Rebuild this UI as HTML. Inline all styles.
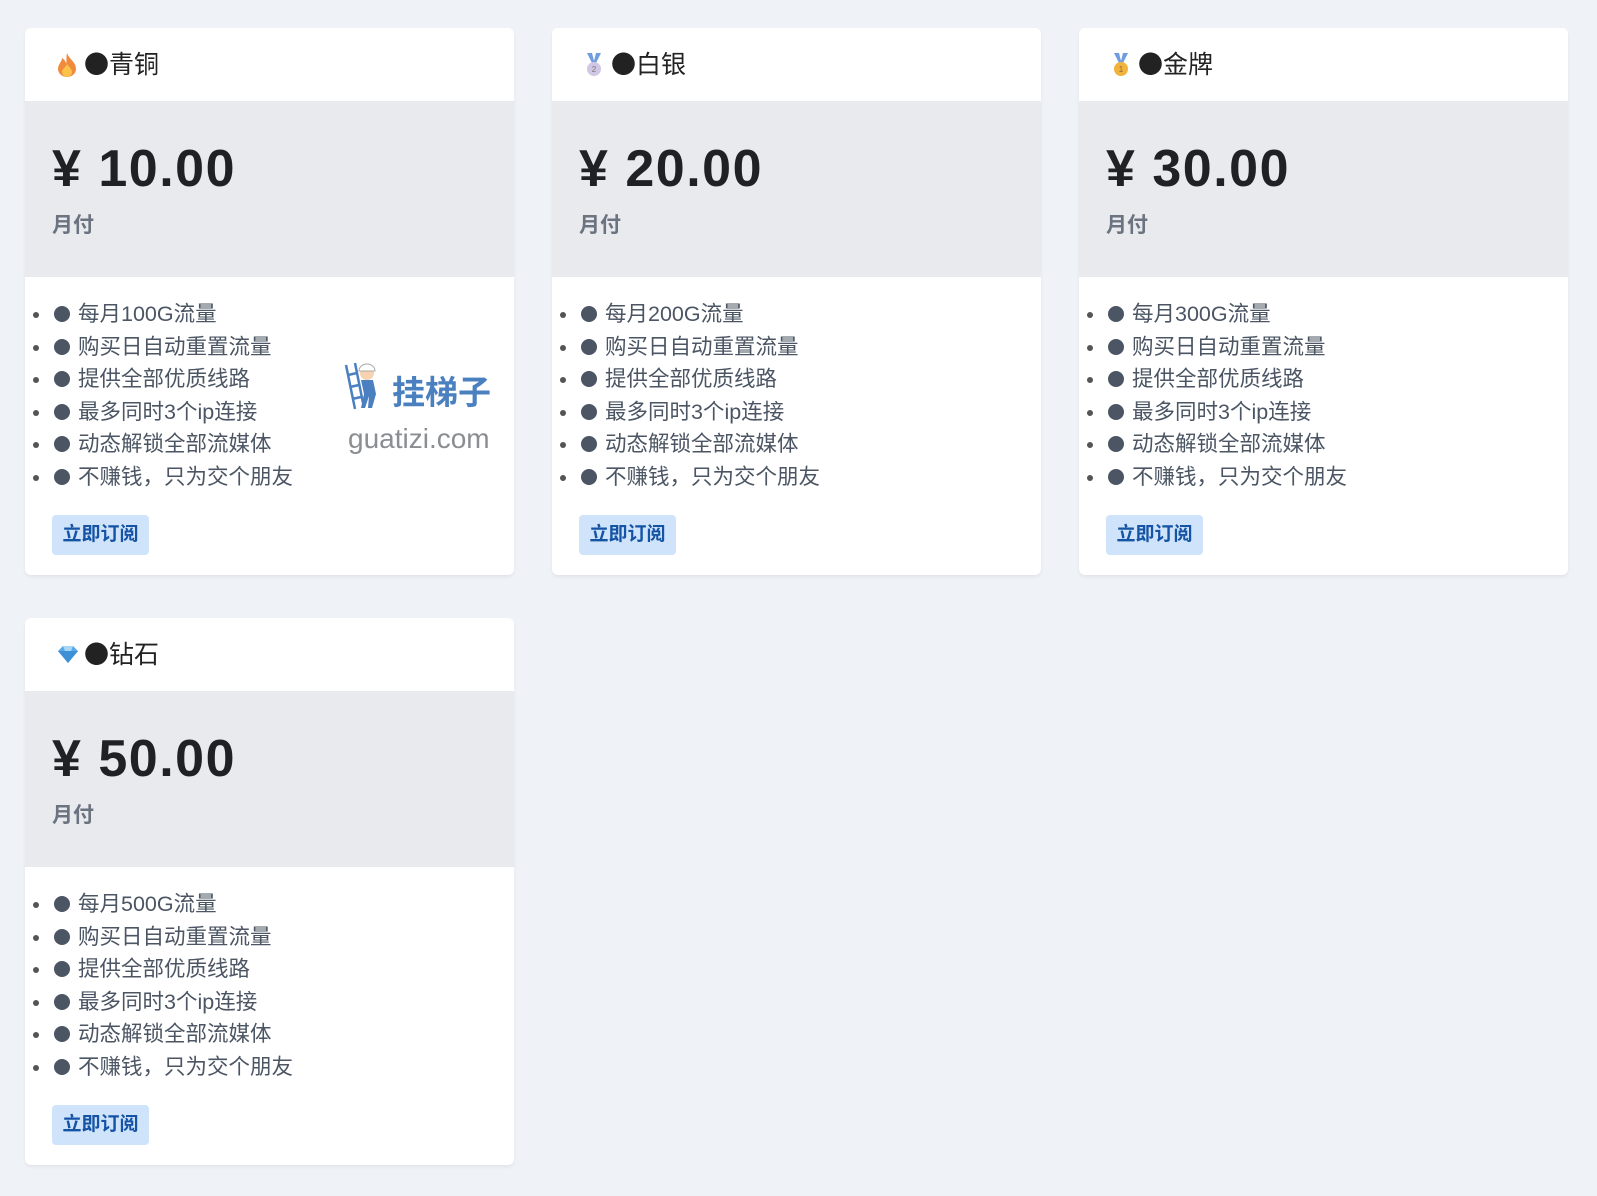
<!DOCTYPE html>
<html><head><meta charset="utf-8">
<style>
*{margin:0;padding:0;box-sizing:border-box}
body{width:1597px;height:1196px;background:#eff2f7;font-family:"Liberation Sans","Noto Sans CJK SC",sans-serif;position:relative;overflow:hidden}
.card{position:absolute;width:489px;height:547px;background:#fff;border-radius:6px;box-shadow:0 2px 3px rgba(0,0,0,.06);overflow:hidden}
.hd{height:73px;position:relative}
.hd svg{position:absolute;left:31px;top:24px}
.hd .t{position:absolute;left:59px;top:20px;font-size:25px;color:#222;line-height:30px;font-family:"Noto Sans CJK SC",sans-serif}
.pr{height:176px;background:#e8eaed;position:relative}
.pr .p{position:absolute;left:27px;top:42px;font-size:52px;line-height:52px;font-weight:bold;color:#1f2125;letter-spacing:1.5px}
.pr .m{position:absolute;left:27px;top:114px;font-size:21px;line-height:21px;font-weight:bold;color:#6b7280}
ul{position:absolute;left:0;top:270px;list-style:none}
li{position:relative;height:32.6px;line-height:32.6px;font-size:21.5px;color:#4b5563;padding-left:53px;white-space:nowrap}
li:before{content:"";position:absolute;left:8px;top:14px;width:6px;height:6px;border-radius:50%;background:#555}
li span{position:absolute;left:29px;top:8px;width:16px;height:16px;border-radius:50%;background:#4b5563}
.btn{position:absolute;left:27px;top:487px;width:97px;height:40px;background:#cfe4fb;border-radius:4px;color:#1553a5;font-weight:bold;font-size:19px;line-height:40px;text-align:center}
.wm1{position:absolute;left:367px;top:345px;font-size:33px;line-height:40px;font-weight:bold;color:#4a7fc0}
.wm2{position:absolute;left:323px;top:394px;font-size:28px;line-height:34px;color:#8a8d91}
</style></head><body>

<div class="card" style="left:25px;top:28px">
<div class="hd"><svg width="22" height="26" viewBox="0 0 22 26"><path d="M11 1C13 7 20 10 20 17a9 8 0 0 1-18 0C2 12 6 10 6 6c3 2 4 4 4 6 1-4 0-7 1-11z" fill="#f08a3c"/><path d="M11 12c2 3 5 5 5 8a5 5 0 0 1-10 0c0-3 3-4 5-8z" fill="#fbc34a"/></svg><div class="t">●青铜</div></div>
<div class="pr"><div class="p">¥ 10.00</div><div class="m">月付</div></div>
<ul><li><span></span>每月100G流量</li><li><span></span>购买日自动重置流量</li><li><span></span>提供全部优质线路</li><li><span></span>最多同时3个ip连接</li><li><span></span>动态解锁全部流媒体</li><li><span></span>不赚钱，只为交个朋友</li></ul>
<svg style="position:absolute;left:318px;top:333px" width="40" height="50" viewBox="0 0 40 50"><path d="M3 4l9 44M12 2l8 40M5 14l9-2M7 26l9-2M9 38l9-2" stroke="#4a7fc0" stroke-width="2.5" fill="none"/><circle cx="24" cy="12" r="7" fill="#f6d2b0"/><path d="M16 10a8 7 0 0 1 16 0z" fill="#fff" stroke="#aaa"/><path d="M18 19h12l3 14-4 14h-4l1-12-4 12h-4l3-14z" fill="#4a7fc0"/></svg>
<div class="wm1">挂梯子</div><div class="wm2">guatizi.com</div>
<div class="btn">立即订阅</div>
</div>

<div class="card" style="left:552px;top:28px">
<div class="hd"><svg width="22" height="26" viewBox="0 0 22 26"><path d="M4 1h5l2 8 2-8h5l-5 10h-4z" fill="#6f9de0"/><circle cx="11" cy="17" r="7" fill="#d0c7e6"/><text x="11" y="20" font-size="8" text-anchor="middle" fill="#776">2</text></svg><div class="t">●白银</div></div>
<div class="pr"><div class="p">¥ 20.00</div><div class="m">月付</div></div>
<ul><li><span></span>每月200G流量</li><li><span></span>购买日自动重置流量</li><li><span></span>提供全部优质线路</li><li><span></span>最多同时3个ip连接</li><li><span></span>动态解锁全部流媒体</li><li><span></span>不赚钱，只为交个朋友</li></ul>
<div class="btn">立即订阅</div>
</div>

<div class="card" style="left:1079px;top:28px">
<div class="hd"><svg width="22" height="26" viewBox="0 0 22 26"><path d="M4 1h5l2 8 2-8h5l-5 10h-4z" fill="#6f9de0"/><circle cx="11" cy="17" r="7" fill="#f2b33d"/><text x="11" y="20" font-size="8" text-anchor="middle" fill="#864">1</text></svg><div class="t">●金牌</div></div>
<div class="pr"><div class="p">¥ 30.00</div><div class="m">月付</div></div>
<ul><li><span></span>每月300G流量</li><li><span></span>购买日自动重置流量</li><li><span></span>提供全部优质线路</li><li><span></span>最多同时3个ip连接</li><li><span></span>动态解锁全部流媒体</li><li><span></span>不赚钱，只为交个朋友</li></ul>
<div class="btn">立即订阅</div>
</div>

<div class="card" style="left:25px;top:618px">
<div class="hd"><svg width="24" height="26" viewBox="0 0 24 26"><path d="M2 9l5-5h10l5 5-10 12z" fill="#5aa9e8"/><path d="M2 9h20L12 21z" fill="#3d8fd6"/><path d="M7 4l2 5h6l2-5" fill="#a8d6f7"/></svg><div class="t">●钻石</div></div>
<div class="pr"><div class="p">¥ 50.00</div><div class="m">月付</div></div>
<ul><li><span></span>每月500G流量</li><li><span></span>购买日自动重置流量</li><li><span></span>提供全部优质线路</li><li><span></span>最多同时3个ip连接</li><li><span></span>动态解锁全部流媒体</li><li><span></span>不赚钱，只为交个朋友</li></ul>
<div class="btn">立即订阅</div>
</div>

</body></html>
